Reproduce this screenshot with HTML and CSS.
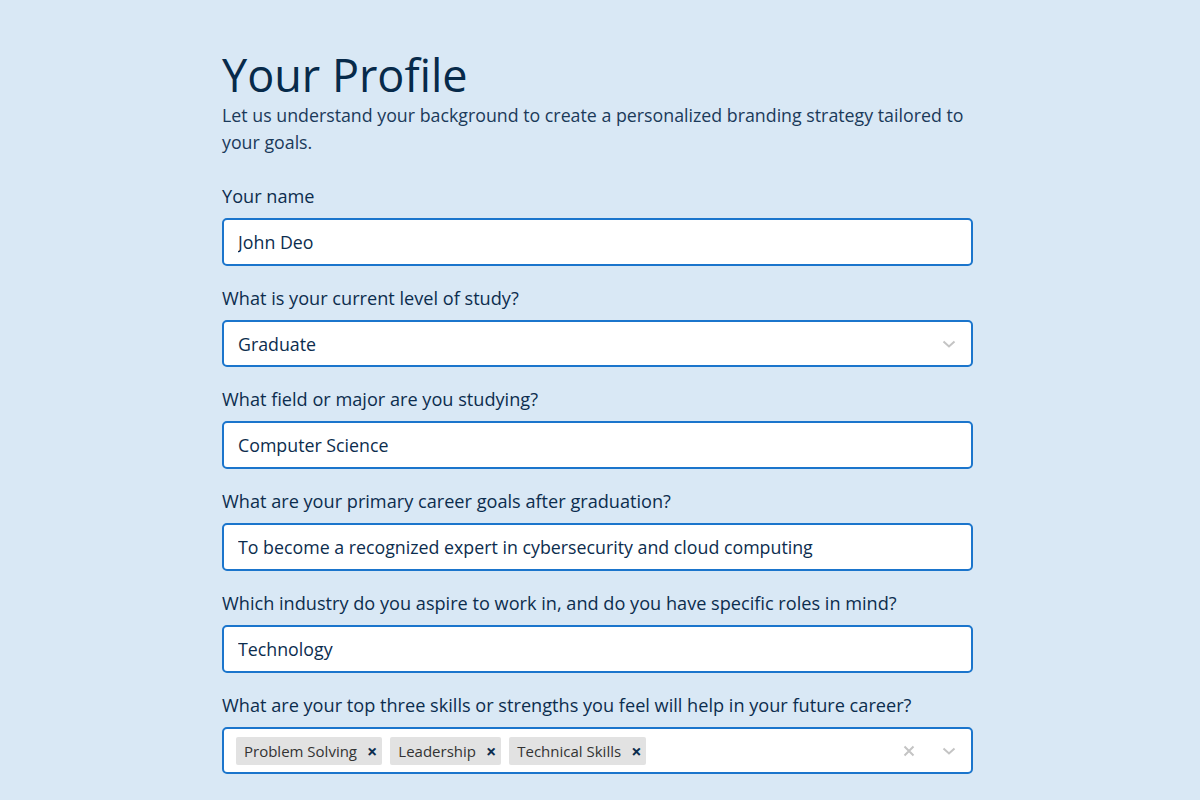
FILE: index.html
```html
<!DOCTYPE html>
<html lang="en">
<head>
    <meta charset="UTF-8">
    <meta name="viewport" content="width=device-width, initial-scale=1.0">
    <title>Your Profile</title>
    <link rel="stylesheet" href="styles.css">
</head>
<body>
    <div class="page">
        <h1>Your Profile</h1>
        <p class="intro">Let us understand your background to create a personalized branding strategy tailored to your goals.</p>

        <form class="profile-form">
            <div class="field">
                <label for="name">Your name</label>
                <input type="text" id="name" value="John Deo">
            </div>

            <div class="field">
                <label>What is your current level of study?</label>
                <div class="select-box">
                    <span class="value">Graduate</span>
                    <span class="indicators">
                        <svg class="chevron" width="20" height="20" viewBox="0 0 20 20"><path d="M4.5 7.5 L10 12.5 L15.5 7.5" fill="none" stroke="currentColor" stroke-width="2"/></svg>
                    </span>
                </div>
            </div>

            <div class="field">
                <label for="major">What field or major are you studying?</label>
                <input type="text" id="major" value="Computer Science">
            </div>

            <div class="field">
                <label for="goals">What are your primary career goals after graduation?</label>
                <input type="text" id="goals" value="To become a recognized expert in cybersecurity and cloud computing">
            </div>

            <div class="field">
                <label for="industry">Which industry do you aspire to work in, and do you have specific roles in mind?</label>
                <input type="text" id="industry" value="Technology">
            </div>

            <div class="field">
                <label>What are your top three skills or strengths you feel will help in your future career?</label>
                <div class="select-box multi">
                    <div class="tags">
                        <span class="tag">Problem Solving <span class="remove">&times;</span></span>
                        <span class="tag">Leadership <span class="remove">&times;</span></span>
                        <span class="tag">Technical Skills <span class="remove">&times;</span></span>
                    </div>
                    <span class="indicators">
                        <svg class="clear" width="20" height="20" viewBox="0 0 20 20"><path d="M5.5 5.5 L14.5 14.5 M14.5 5.5 L5.5 14.5" fill="none" stroke="currentColor" stroke-width="2"/></svg>
                        <svg class="chevron" width="20" height="20" viewBox="0 0 20 20"><path d="M4.5 7.5 L10 12.5 L15.5 7.5" fill="none" stroke="currentColor" stroke-width="2"/></svg>
                    </span>
                </div>
            </div>
        </form>
    </div>
</body>
</html>
```

FILE: styles.css
```css
body {
    margin: 0;
    background: #d9e8f5;
    font-family: "Open Sans", "Liberation Sans", sans-serif;
    color: #0c2d4e;
}
.page {
    width: 751px;
    margin-left: 222px;
    padding-top: 45px;
}
h1 {
    margin: 0;
    font-size: 45px;
    font-weight: 400;
    line-height: 60px;
    color: #072a4a;
}
.intro {
    margin: -3px 0 28px;
    font-size: 17.8px;
    line-height: 27px;
    color: #1b3a5a;
}
.field {
    margin-bottom: 20px;
}
.field label {
    display: block;
    font-size: 18.15px;
    font-weight: 500;
    line-height: 24px;
    margin-bottom: 10px;
}
input, .select-box {
    box-sizing: border-box;
    width: 100%;
    height: 48px;
    padding: 0 14px;
    border: 2px solid #1b75cc;
    border-radius: 5px;
    background: #fff;
    font-family: inherit;
    font-size: 17.8px;
    color: #0c2d4e;
    outline: none;
}
.select-box {
    display: flex;
    align-items: center;
    justify-content: space-between;
    height: 47px;
}
.select-box.multi {
    padding-left: 12px;
}
.indicators {
    display: flex;
    align-items: center;
    gap: 20px;
    color: #c4c4c4;
    margin-right: -2px;
}
.tags {
    display: flex;
    gap: 8px;
}
.tag {
    display: flex;
    align-items: center;
    gap: 6px;
    height: 28px;
    padding: 0 1px 0 8px;
    background: #e2e2e2;
    border-radius: 2px;
    font-size: 15px;
    color: #333;
}
.tag .remove {
    font-size: 18px;
    font-weight: 700;
    color: #0c2d4e;
    padding: 0 4px;
}
```
